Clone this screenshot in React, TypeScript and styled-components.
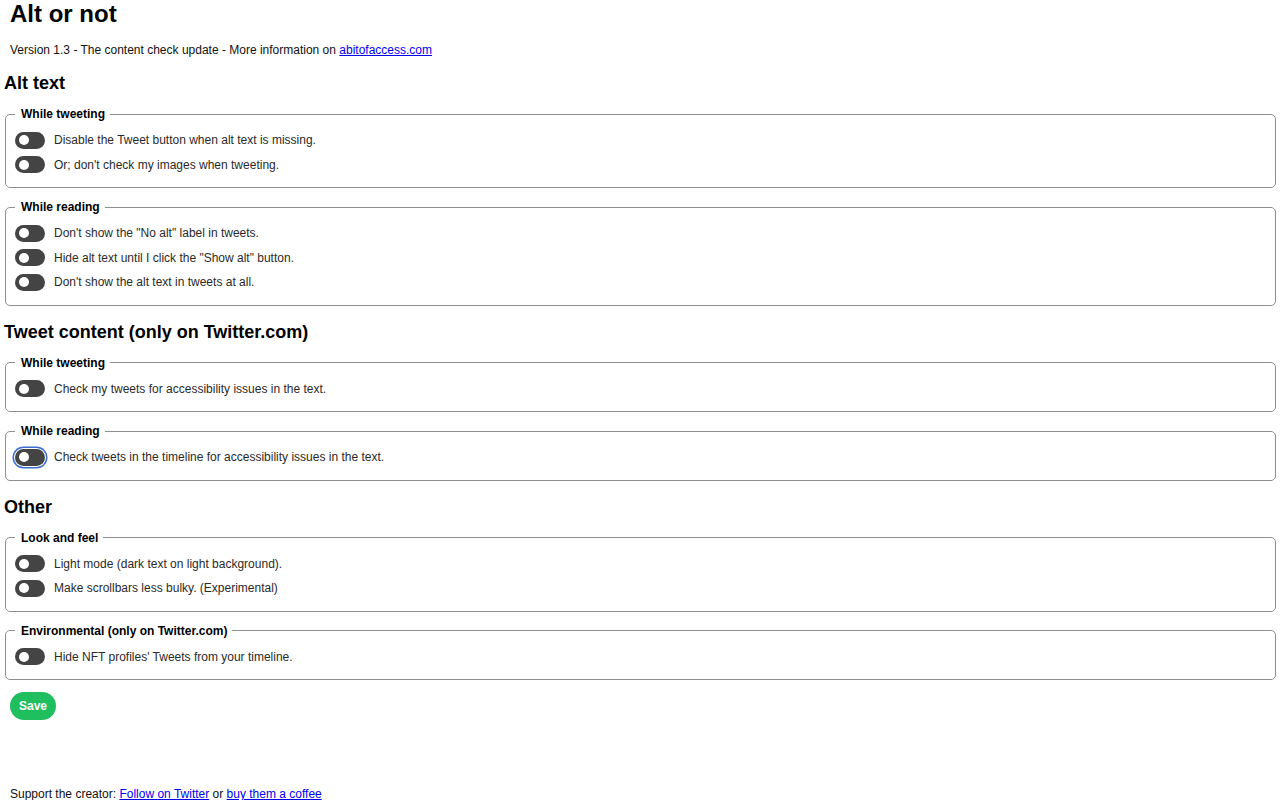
import React from 'react';
import styled, { createGlobalStyle } from 'styled-components';

const Global = createGlobalStyle`
body {
  margin: 0;
  background: #ffffff;
  font-family: "Liberation Sans", Arial, sans-serif;
  color: #222222;
}
`;

const Pagina = styled.main`
display: block;
padding: 0 4px 0 5px;
`;

const Titulo = styled.h1`
margin: 0;
padding-left: 5px;
font-size: 24px;
font-weight: bold;
color: #000000;
`;

const Versao = styled.p`
margin: 15px 0 0;
padding-left: 5px;
font-size: 12px;
color: #111111;
`;

const Link = styled.a`
color: #0000ee;
text-decoration: underline;
`;

const Secao = styled.h2`
margin: 16px 0 13px -1px;
font-size: 18px;
font-weight: bold;
color: #000000;
`;

const Grupo = styled.fieldset`
margin: 0 0 12px;
padding: 7px 9px 10px;
border: 1px solid #8f8f8f;
border-radius: 5px;
min-width: 0;
`;

const Legenda = styled.legend`
padding: 0 5px 0 6px;
font-size: 12px;
font-weight: bold;
color: #000000;
`;

const Linha = styled.label`
display: flex;
align-items: center;
gap: 9px;
height: 24.5px;
font-size: 12px;
color: #2a2a2a;
`;

const Chave = styled.span<{ $foco?: boolean }>`
position: relative;
flex: none;
width: 30px;
height: 17px;
border-radius: 9px;
background: #444444;
box-shadow: ${(p) => (p.$foco ? '0 0 0 1px #ffffff, 0 0 0 2.5px #3c6fcf' : 'none')};

&::after {
  content: '';
  position: absolute;
  left: 4px;
  top: 3.5px;
  width: 10px;
  height: 10px;
  border-radius: 50%;
  background: #ffffff;
}
`;

const Salvar = styled.button`
display: block;
margin-left: 5px;
height: 28px;
padding: 0 9px;
border: none;
border-radius: 14px;
background: #1fbf60;
color: #ffffff;
font-family: "Liberation Sans", Arial, sans-serif;
font-size: 12px;
font-weight: bold;
`;

const Rodape = styled.p`
margin: 67px 0 0;
padding-left: 5px;
font-size: 12px;
color: #111111;
`;

type Opcao = { texto: string; foco?: boolean };

function Bloco({ titulo, opcoes }: { titulo: string; opcoes: Opcao[] }) {
  return (
    <Grupo>
      <Legenda>{titulo}</Legenda>
      {opcoes.map((o) => (
        <Linha key={o.texto}>
          <Chave $foco={o.foco} role="switch" aria-checked="false" />
          {o.texto}
        </Linha>
      ))}
    </Grupo>
  );
}

function App() {
  return (
    <>
      <Global />
      <Pagina>
        <Titulo>Alt or not</Titulo>
        <Versao>
          Version 1.3 - The content check update - More information on{' '}
          <Link href="#">abitofaccess.com</Link>
        </Versao>

        <Secao>Alt text</Secao>
        <Bloco
          titulo="While tweeting"
          opcoes={[
            { texto: 'Disable the Tweet button when alt text is missing.' },
            { texto: "Or; don't check my images when tweeting." },
          ]}
        />
        <Bloco
          titulo="While reading"
          opcoes={[
            { texto: 'Don\'t show the "No alt" label in tweets.' },
            { texto: 'Hide alt text until I click the "Show alt" button.' },
            { texto: "Don't show the alt text in tweets at all." },
          ]}
        />

        <Secao>Tweet content (only on Twitter.com)</Secao>
        <Bloco
          titulo="While tweeting"
          opcoes={[{ texto: 'Check my tweets for accessibility issues in the text.' }]}
        />
        <Bloco
          titulo="While reading"
          opcoes={[
            { texto: 'Check tweets in the timeline for accessibility issues in the text.', foco: true },
          ]}
        />

        <Secao>Other</Secao>
        <Bloco
          titulo="Look and feel"
          opcoes={[
            { texto: 'Light mode (dark text on light background).' },
            { texto: 'Make scrollbars less bulky. (Experimental)' },
          ]}
        />
        <Bloco
          titulo="Environmental (only on Twitter.com)"
          opcoes={[{ texto: "Hide NFT profiles' Tweets from your timeline." }]}
        />

        <Salvar>Save</Salvar>

        <Rodape>
          Support the creator: <Link href="#">Follow on Twitter</Link> or{' '}
          <Link href="#">buy them a coffee</Link>
        </Rodape>
      </Pagina>
    </>
  );
}

export default App;
